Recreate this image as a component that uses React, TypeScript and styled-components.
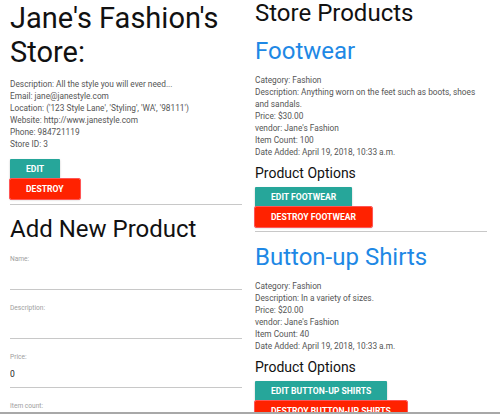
import React from "react";
import styled, { createGlobalStyle } from "styled-components";

const Global = createGlobalStyle`
  html, body { margin: 0; padding: 0; background: #fff; }
  body { font-family: Roboto, "Liberation Sans", Arial, sans-serif; color: #222; overflow: hidden; }
  * { box-sizing: border-box; }
`;

const Page = styled.div`
  display: grid;
  grid-template-columns: 232px 232px;
  column-gap: 13px;
  padding-left: 10px;
  align-items: start;
`;

const Column = styled.section`
  display: flex;
  flex-direction: column;
  align-items: flex-start;
`;

const StoreTitle = styled.h1`
  margin: 1px 0 0;
  font-size: 29px;
  font-weight: 400;
  line-height: 34px;
  color: #111;
`;

const SectionTitle = styled.h2<{ $mt?: number }>`
  margin: ${(p) => p.$mt ?? 0}px 0 0;
  font-size: 24px;
  font-weight: 400;
  line-height: 26.4px;
  color: #111;
`;

const ProductTitle = styled.h3<{ $mt: number }>`
  margin: ${(p) => p.$mt}px 0 0;
  font-size: 24px;
  font-weight: 400;
  line-height: 28.8px;
  color: #1e88e5;
`;

const Info = styled.div<{ $mt: number }>`
  margin-top: ${(p) => p.$mt}px;
  font-size: 8.3px;
  line-height: 12px;
  color: #555;
  width: 100%;
`;

const Line = styled.div``;

const OptionsTitle = styled.h4<{ $mt: number }>`
  margin: ${(p) => p.$mt}px 0 0;
  font-size: 14px;
  font-weight: 400;
  line-height: 17px;
  color: #111;
`;

const ButtonStack = styled.div<{ $mt: number }>`
  margin-top: ${(p) => p.$mt}px;
  display: flex;
  flex-direction: column;
  align-items: flex-start;
`;

const Btn = styled.button<{ $kind: "edit" | "destroy" }>`
  height: 20px;
  padding: 0 16px;
  border: none;
  border-radius: 1px;
  font-family: Roboto, "Liberation Sans", Arial, sans-serif;
  font-size: 8.6px;
  font-weight: 700;
  text-transform: uppercase;
  color: #fff;
  background: ${(p) => (p.$kind === "edit" ? "#26a69a" : "#ff2200")};
  box-shadow: 0 1px 2px rgba(0, 0, 0, 0.25);
  ${(p) => (p.$kind === "destroy" ? "outline: 1px solid #f55;" : "")}
  white-space: nowrap;
  cursor: pointer;
`;

const Divider = styled.hr<{ $mt: number }>`
  align-self: stretch;
  margin: ${(p) => p.$mt}px 0 0;
  border: none;
  border-top: 1px solid #c8c8c8;
  height: 0;
`;

const Form = styled.form`
  margin-top: 13px;
  display: flex;
  flex-direction: column;
  align-self: stretch;
`;

const Field = styled.div`
  display: flex;
  flex-direction: column;
  margin-bottom: 14px;
`;

const Label = styled.label`
  font-size: 6.6px;
  line-height: 8px;
  color: #9e9e9e;
`;

const Input = styled.input`
  height: 27px;
  border: none;
  border-bottom: 1px solid #c8c8c8;
  outline: none;
  padding: 0;
  font-family: Roboto, "Liberation Sans", Arial, sans-serif;
  font-size: 8.5px;
  color: #222;
  background: transparent;
`;

const BottomEdge = styled.div`
  position: fixed;
  left: 0;
  right: 0;
  bottom: 0;
  height: 2px;
  background: #a8a8a8;
`;

type Product = {
  name: string;
  description: string;
  price: string;
  count: number;
};

const products: Product[] = [
  {
    name: "Footwear",
    description: "Anything worn on the feet such as boots, shoes and sandals.",
    price: "$30.00",
    count: 100,
  },
  {
    name: "Button-up Shirts",
    description: "In a variety of sizes.",
    price: "$20.00",
    count: 40,
  },
];

export default function App() {
  return (
    <>
      <Global />
      <Page>
        <Column>
          <StoreTitle>
            Jane's Fashion's
            <br />
            Store:
          </StoreTitle>
          <Info $mt={9}>
            <Line>Description: All the style you will ever need...</Line>
            <Line>Email: jane@janestyle.com</Line>
            <Line>Location: ('123 Style Lane', 'Styling', 'WA', '98111')</Line>
            <Line>Website: http://www.janestyle.com</Line>
            <Line>Phone: 984721119</Line>
            <Line>Store ID: 3</Line>
          </Info>
          <ButtonStack $mt={9}>
            <Btn $kind="edit">Edit</Btn>
            <Btn $kind="destroy">Destroy</Btn>
          </ButtonStack>
          <Divider $mt={5} />
          <SectionTitle $mt={11}>Add New Product</SectionTitle>
          <Form onSubmit={(e) => e.preventDefault()}>
            <Field>
              <Label>Name:</Label>
              <Input type="text" />
            </Field>
            <Field>
              <Label>Description:</Label>
              <Input type="text" />
            </Field>
            <Field>
              <Label>Price:</Label>
              <Input type="text" defaultValue="0" />
            </Field>
            <Field>
              <Label>Item count:</Label>
              <Input type="text" />
            </Field>
          </Form>
        </Column>
        <Column>
          <SectionTitle>Store Products</SectionTitle>
          {products.map((p, i) => (
            <React.Fragment key={p.name}>
              <ProductTitle $mt={11}>{p.name}</ProductTitle>
              <Info $mt={8}>
                <Line>Category: Fashion</Line>
                <Line>Description: {p.description}</Line>
                <Line>Price: {p.price}</Line>
                <Line>vendor: Jane's Fashion</Line>
                <Line>Item Count: {p.count}</Line>
                <Line>Date Added: April 19, 2018, 10:33 a.m.</Line>
              </Info>
              <OptionsTitle $mt={7}>Product Options</OptionsTitle>
              <ButtonStack $mt={5}>
                <Btn $kind="edit">Edit {p.name}</Btn>
                <Btn $kind="destroy">Destroy {p.name}</Btn>
              </ButtonStack>
              {i === 0 && <Divider $mt={4} />}
            </React.Fragment>
          ))}
        </Column>
      </Page>
      <BottomEdge />
    </>
  );
}
